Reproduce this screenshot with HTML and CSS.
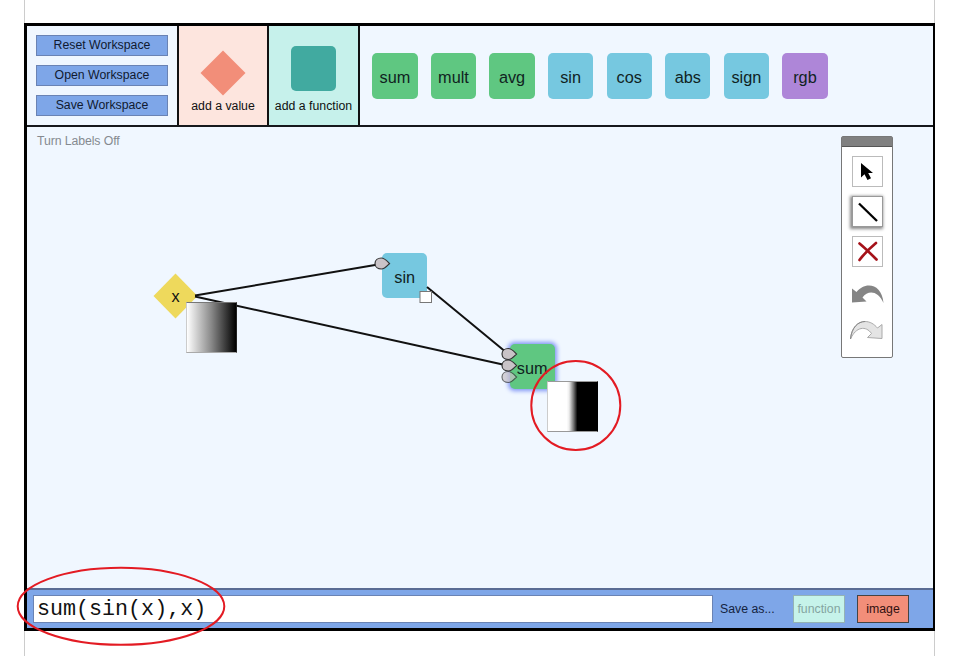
FILE: index.html
```
<!DOCTYPE html>
<html lang="en">
<head>
<meta charset="utf-8">
<title>Function Workspace</title>
<link rel="stylesheet" href="styles.css">
</head>
<body>
<div class="page">
<main class="frame">
  <header class="toolbar">
    <div class="actions">
      <button class="action">Reset Workspace</button>
      <button class="action">Open Workspace</button>
      <button class="action">Save Workspace</button>
    </div>
    <div class="add add-value">
      <svg width="46" height="46" viewBox="0 0 46 46"><path d="M23 .5 45.5 23 23 45.5.5 23z" fill="#f28e79"/></svg>
      <span>add a value</span>
    </div>
    <div class="add add-function">
      <i class="function-shape"></i>
      <span>add a function</span>
    </div>
    <div class="palette">
      <span class="chip green">sum</span>
      <span class="chip green">mult</span>
      <span class="chip green">avg</span>
      <span class="chip blue">sin</span>
      <span class="chip blue">cos</span>
      <span class="chip blue">abs</span>
      <span class="chip blue">sign</span>
      <span class="chip purple">rgb</span>
    </div>
  </header>
  <section class="canvas">
    <span class="labels-toggle">Turn Labels Off</span>
    <svg class="diamond" width="45" height="46" viewBox="0 0 45 46"><path d="M22.5.5 44.5 23 22.5 45.5.5 23z" fill="#eed95c"/></svg>
    <span class="node-x">x</span>
    <span class="chip blue node node-sin">sin</span>
    <span class="chip green node node-sum">sum</span>
    <svg class="wires" width="906" height="461" viewBox="27 127 906 461">
      <g stroke="#111" stroke-width="2" fill="none">
        <path d="M195 295.500 378 264.500M195 296.500 505 365M427 287 507 353"/>
      </g>
      <g fill="#c9c3c7" stroke="#333" stroke-width="1.200">
        <path id="port" d="M375 263.500c0-3.500 3-5.500 6.300-5.500 3.400 0 5.700 3 8.200 5.500-2.500 2.500-4.800 5.500-8.200 5.500-3.300 0-6.300-2-6.300-5.500z"/>
        <use href="#port" x="127" y="90.500"/>
        <use href="#port" x="127" y="102"/>
        <use href="#port" x="127" y="113.500" opacity=".7"/>
      </g>
      <rect x="420" y="291.500" width="11.500" height="11" fill="#fff" stroke="#777"/>
    </svg>
    <i class="preview preview-x"></i>
    <i class="preview preview-sum"></i>
    <aside class="tools">
      <i class="grip"></i>
      <span class="tool"><svg width="29" height="29" viewBox="0 0 29 29"><path d="M8 6v14.500l3.500-3.200 3 5.700 3.500-1.700-2.800-5.300h4.800z" fill="#000"/></svg></span>
      <span class="tool active"><svg width="29" height="29" viewBox="0 0 29 29"><path d="m6 6.500 18 17.500" stroke="#000" stroke-width="2.300"/></svg></span>
      <span class="tool"><svg width="29" height="29" viewBox="0 0 29 29"><path d="M6.500 6.500c5 4 11 10 17 16M23 6c-6 5-12 11-16.500 17" stroke="#a51219" stroke-width="2.700" stroke-linecap="round" fill="none"/></svg></span>
      <svg class="history" width="34" height="20" viewBox="0 0 34 20"><path d="M2 4.500V18.500L16.500 17.500 12.500 13.500C18 6 28 6.500 33.500 19 32.500 7 26 1.500 19 1.500c-5 0-9 2.500-12.500 6.500z" fill="#858585"/></svg>
      <svg class="history redo" width="34" height="20" viewBox="0 0 34 20"><path d="M32 4.500V18.500L17.500 17.500 21.500 13.500C16 5.500 6 6.500.5 19 1.500 7 8 1.500 15 1.500c5 0 9 2.500 12.500 6.500z" fill="#e4e4e4" stroke="#aaa"/><path d="M.5 19C1.500 8 8 1.500 15 1.500" fill="none" stroke="#888"/></svg>
    </aside>
  </section>
  <footer class="bar">
    <div class="formula">sum(sin(x),x)</div>
    <span class="save-as">Save as...</span>
    <button class="save save-function">function</button>
    <button class="save save-image">image</button>
  </footer>
</main>
<svg class="marks" width="960" height="656" viewBox="0 0 960 656">
  <g fill="none" stroke="#e31b23" stroke-width="2">
    <ellipse cx="121" cy="606.300" rx="103.300" ry="38.500"/>
    <circle cx="575.800" cy="405.500" r="44.500"/>
  </g>
</svg>
</div>
</body>
</html>
```
FILE: styles.css
```
* { box-sizing: border-box; }
body {
  margin: 0;
  background: #fff;
  font-family: "Liberation Sans", Arial, sans-serif;
  font-size: 12.3px;
  color: #111;
}
.page {
  position: relative;
  width: 960px;
  height: 656px;
  padding: 23px 25px 25px 24px;
  background:
    linear-gradient(#ccc, #ccc) 24px 0 / 1px 656px no-repeat,
    linear-gradient(#ccc, #ccc) 934px 0 / 1px 656px no-repeat;
  overflow: hidden;
}
.frame {
  display: flex;
  flex-direction: column;
  height: 608px;
  border: 3px solid #000;
  border-right-width: 2px;
  background: #f0f7ff;
}
.toolbar {
  display: flex;
  height: 101px;
  border-bottom: 2px solid #16181c;
}
button {
  padding: 0;
  font: inherit;
  color: #101a30;
}
.actions {
  display: flex;
  flex-direction: column;
  gap: 9px;
  width: 152px;
  padding: 9px 9px 0;
  border-right: 2px solid #111;
}
.action {
  height: 21px;
  line-height: 18px;
  padding-bottom: 1px;
  background: #7ea6e8;
  border: 1px solid #6a83b4;
}
.add {
  display: flex;
  flex-direction: column;
  align-items: center;
  width: 90px;
  border-right: 2px solid #111;
  white-space: nowrap;
}
.add span { line-height: 14px; }
.add-value { background: #fde5de; padding-top: 24px; }
.add-value span { margin-top: 3px; }
.add-function { width: 91px; background: #c6f1eb; padding-top: 20px; }
.add-function span { margin-top: 8px; }
.function-shape {
  width: 45px;
  height: 45px;
  border-radius: 5px;
  background: #41aaa0;
}
.palette {
  display: flex;
  gap: 13.2px;
  padding: 27.300px 0 0 12.200px;
}
.chip {
  width: 45.400px;
  height: 45.400px;
  border-radius: 5px;
  font-size: 16.300px;
  line-height: 48px;
  text-align: center;
  color: #10231f;
}
.green { background: #5fc781; }
.blue { background: #76c8e0; }
.purple { background: #ae86d8; }
.canvas {
  position: relative;
  flex: 1;
}
.labels-toggle {
  display: block;
  padding: 7px 0 0 10px;
  line-height: 14px;
  letter-spacing: -0.1px;
  color: #858a90;
}
.diamond { position: absolute; left: 125.500px; top: 146px; }
.node-x {
  position: absolute;
  left: 139px;
  top: 159px;
  width: 19px;
  text-align: center;
  font-size: 16.300px;
  line-height: 20px;
}
.node { position: absolute; }
.node-sin { left: 355px; top: 126px; }
.node-sum { left: 482.500px; top: 216.500px; box-shadow: 0 0 4px 1.500px #8296f5; }
.wires { position: absolute; left: 0; top: 0; }
.preview { position: absolute; width: 51px; height: 51px; border: 1px solid #aaa; }
.preview-x {
  left: 159px;
  top: 175px;
  background: linear-gradient(90deg, #fff, #888 50%, #000);
  border-color: #777 #222 #aaa #ccc;
}
.preview-sum {
  left: 520px;
  top: 254px;
  background: linear-gradient(90deg, #fff 38%, #eee 43%, #777 52%, #000 60%);
  border-color: #999 #000 #999 #ccc;
}
.tools {
  position: absolute;
  left: 814px;
  top: 9px;
  width: 52px;
  height: 222px;
  display: flex;
  flex-direction: column;
  align-items: center;
  border: 1.5px solid #777;
  border-radius: 2px;
  background: #fff;
}
.grip {
  width: 100%;
  height: 10px;
  margin-bottom: 9px;
  background: #808080;
  border-bottom: 1px solid #555;
}
.tool {
  width: 31px;
  height: 31px;
  margin-bottom: 9px;
  border: 1px solid #bbb;
}
.tool svg { display: block; }
.active { border-color: #999; box-shadow: -1px 1px 3px 1px #888; }
.history { margin-top: 8px; }
.redo { margin-top: 16px; }
.bar {
  display: flex;
  align-items: center;
  height: 40px;
  padding: 0 0 0 6px;
  border-top: 2px solid #5a6c94;
  background: #7ea6e8;
}
.formula {
  width: 680px;
  height: 28px;
  padding-left: 3px;
  border: 1px solid #6a83b4;
  background: #fff;
  font: 21.700px/27px "Liberation Mono", monospace;
}
.save-as { width: 80px; padding-left: 7px; color: #142340; }
.save {
  width: 52px;
  height: 28px;
  border: 1.500px solid #444;
}
.save-function { background: #c6f3ea; border-color: #94b3b4; color: #84a5a1; }
.save-image { margin-left: 12px; background: #f28e79; color: #301010; }
.marks { position: absolute; left: 0; top: 0; pointer-events: none; }
```
